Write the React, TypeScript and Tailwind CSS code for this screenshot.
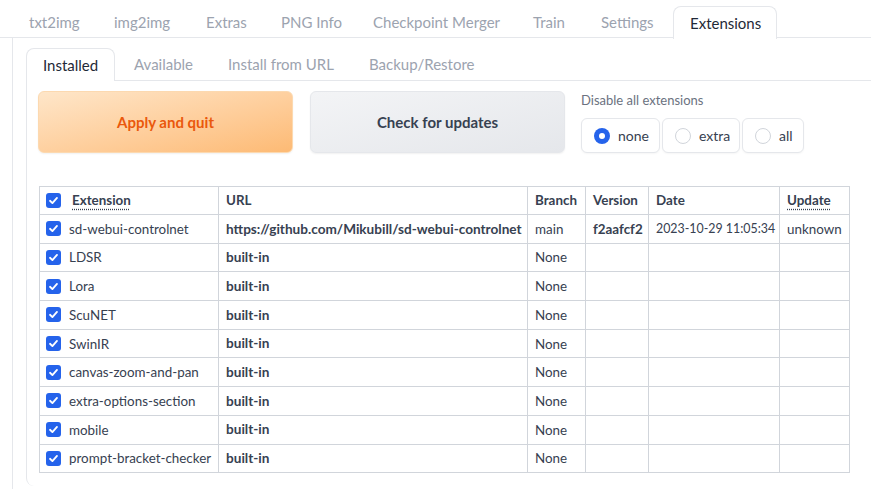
import React from "react";

const topTabs = [
  { label: "txt2img", w: "w-[85px]" },
  { label: "img2img", w: "w-[92px]" },
  { label: "Extras", w: "w-[75px]" },
  { label: "PNG Info", w: "w-[92px]" },
  { label: "Checkpoint Merger", w: "w-[160px]" },
  { label: "Train", w: "w-[68px]" },
  { label: "Settings", w: "w-[88px]" },
];

const rows: [string, string, string, string, string, string][] = [
  ["sd-webui-controlnet", "https://github.com/Mikubill/sd-webui-controlnet", "main", "f2aafcf2", "2023-10-29 11:05:34", "unknown"],
  ["LDSR", "built-in", "None", "", "", ""],
  ["Lora", "built-in", "None", "", "", ""],
  ["ScuNET", "built-in", "None", "", "", ""],
  ["SwinIR", "built-in", "None", "", "", ""],
  ["canvas-zoom-and-pan", "built-in", "None", "", "", ""],
  ["extra-options-section", "built-in", "None", "", "", ""],
  ["mobile", "built-in", "None", "", "", ""],
  ["prompt-bracket-checker", "built-in", "None", "", "", ""],
];

function Check() {
  return (
    <span className="inline-flex items-center justify-center w-[15px] h-[15px] rounded-[3px] bg-[#2563eb] shrink-0">
      <svg width="11" height="11" viewBox="0 0 12 12" fill="none">
        <path d="M2.2 6.3 L4.8 8.8 L9.8 3.2" stroke="white" strokeWidth="2" strokeLinecap="round" strokeLinejoin="round" />
      </svg>
    </span>
  );
}

function Radio({ label, selected, w }: { label: string; selected?: boolean; w: string }) {
  return (
    <div className={`flex items-center gap-[8px] h-[35px] ${w} pl-[12px] border border-[#e5e7eb] rounded-[6px] bg-white shadow-[0_1px_2px_rgba(0,0,0,0.04)]`}>
      {selected ? (
        <span className="w-[16px] h-[16px] rounded-full bg-[#2563eb] flex items-center justify-center">
          <span className="w-[6px] h-[6px] rounded-full bg-white" />
        </span>
      ) : (
        <span className="w-[16px] h-[16px] rounded-full border border-[#d1d5db] bg-white" />
      )}
      <span className="text-[14px] text-[#374151]">{label}</span>
    </div>
  );
}

export default function App() {
  return (
    <div className="w-[871px] h-[489px] bg-white overflow-hidden font-['Lato',sans-serif] text-[#374151]">
      {/* top tabs */}
      <div className="flex h-[38px] pt-[6px] pl-[13px] border-b border-[#e5e7eb] relative">
        {topTabs.map((t) => (
          <div key={t.label} className={`${t.w} pl-[16px] flex items-center h-[32px] text-[15px] text-[#9ca3af]`}>
            {t.label}
          </div>
        ))}
        <div className="w-[104px] pl-[16px] flex items-center text-[15px] text-[#1f2937] border border-b-0 border-[#e5e7eb] rounded-t-[8px] bg-white mb-[-1px] h-[33px]">
          Extensions
        </div>
      </div>

      {/* outer panel */}
      <div className="ml-[12px] border-l border-b border-[#e5e7eb] rounded-bl-[8px] pl-[13px] pt-[10px] h-[460px]">
        {/* inner tabs */}
        <div className="flex h-[33px] border-b border-[#e5e7eb]">
          <div className="w-[89px] pl-[16px] flex items-center text-[15px] text-[#1f2937] border border-b-0 border-[#e5e7eb] rounded-t-[8px] bg-white h-[33px] mb-[-1px]">
            Installed
          </div>
          <div className="w-[97px] pl-[19px] flex items-center text-[15px] text-[#9ca3af]">Available</div>
          <div className="w-[141px] pl-[16px] flex items-center text-[15px] text-[#9ca3af]">Install from URL</div>
          <div className="w-[140px] pl-[16px] flex items-center text-[15px] text-[#9ca3af]">Backup/Restore</div>
        </div>

        {/* inner panel */}
        <div className="border-l border-[#e5e7eb] rounded-bl-[8px] h-[405px] pl-[11px] pt-[10px]">
          <div className="flex">
            <div className="w-[255px] h-[62px] rounded-[6px] border border-[#fcd9b0] bg-gradient-to-br from-[#fee6c9] to-[#fdba74] flex items-center justify-center text-[15px] font-bold text-[#ea580c] shadow-[0_1px_2px_rgba(0,0,0,0.06)]">
              Apply and quit
            </div>
            <div className="w-[255px] h-[62px] ml-[17px] rounded-[6px] border border-[#e5e7eb] bg-gradient-to-br from-[#f3f4f6] to-[#e5e7eb] flex items-center justify-center text-[15px] font-bold text-[#374151] shadow-[0_1px_2px_rgba(0,0,0,0.06)]">
              Check for updates
            </div>
            <div className="ml-[16px] flex flex-col">
              <div className="text-[13px] text-[#6b7280] leading-[18px]">Disable all extensions</div>
              <div className="flex gap-[2px] mt-[9px]">
                <Radio label="none" selected w="w-[79px]" />
                <Radio label="extra" w="w-[78px]" />
                <Radio label="all" w="w-[62px]" />
              </div>
            </div>
          </div>

          <table className="mt-[33px] ml-[1px] border-collapse text-[13.4px] w-[810px] table-fixed">
            <colgroup>
              <col className="w-[179px]" />
              <col className="w-[309px]" />
              <col className="w-[58px]" />
              <col className="w-[63px]" />
              <col className="w-[131px]" />
              <col className="w-[70px]" />
            </colgroup>
            <thead>
              <tr className="h-[28px]">
                <th className="border border-[#d1d5db] text-left font-bold px-[6px] py-0">
                  <div className="flex items-center gap-[11px]">
                    <Check />
                    <span className="underline decoration-dotted underline-offset-[3px]">Extension</span>
                  </div>
                </th>
                <th className="border border-[#d1d5db] text-left font-bold px-[7px]">URL</th>
                <th className="border border-[#d1d5db] text-left font-bold px-[7px]">Branch</th>
                <th className="border border-[#d1d5db] text-left font-bold px-[7px]">Version</th>
                <th className="border border-[#d1d5db] text-left font-bold px-[7px]">Date</th>
                <th className="border border-[#d1d5db] text-left font-bold px-[7px]">
                  <span className="underline decoration-dotted underline-offset-[3px]">Update</span>
                </th>
              </tr>
            </thead>
            <tbody>
              {rows.map((r) => (
                <tr key={r[0]} className="h-[28.7px]">
                  <td className="border border-[#d1d5db] px-[6px] py-0">
                    <div className="flex items-center gap-[8px]">
                      <Check />
                      <span className="whitespace-nowrap">{r[0]}</span>
                    </div>
                  </td>
                  <td className="border border-[#d1d5db] px-[7px] font-bold whitespace-nowrap text-[13.6px]">{r[1]}</td>
                  <td className="border border-[#d1d5db] px-[7px]">{r[2]}</td>
                  <td className="border border-[#d1d5db] px-[7px] font-bold">{r[3]}</td>
                  <td className="border border-[#d1d5db] px-[7px] whitespace-nowrap text-[12.4px]">{r[4]}</td>
                  <td className="border border-[#d1d5db] px-[7px]">{r[5]}</td>
                </tr>
              ))}
            </tbody>
          </table>
        </div>
      </div>
    </div>
  );
}
